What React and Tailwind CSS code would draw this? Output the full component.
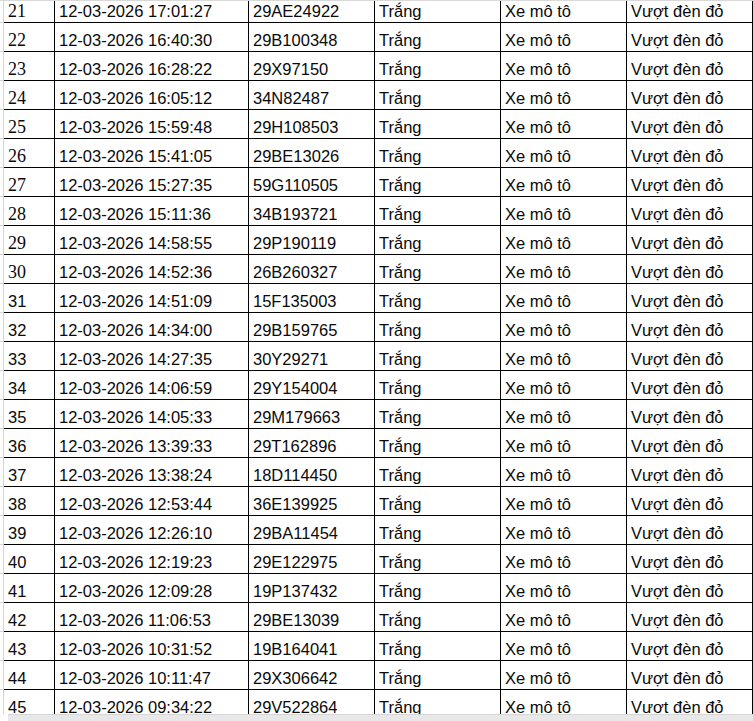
import React from "react";

const rows = [
  [21, "17:01:27", "29AE24922"],
  [22, "16:40:30", "29B100348"],
  [23, "16:28:22", "29X97150"],
  [24, "16:05:12", "34N82487"],
  [25, "15:59:48", "29H108503"],
  [26, "15:41:05", "29BE13026"],
  [27, "15:27:35", "59G110505"],
  [28, "15:11:36", "34B193721"],
  [29, "14:58:55", "29P190119"],
  [30, "14:52:36", "26B260327"],
  [31, "14:51:09", "15F135003"],
  [32, "14:34:00", "29B159765"],
  [33, "14:27:35", "30Y29271"],
  [34, "14:06:59", "29Y154004"],
  [35, "14:05:33", "29M179663"],
  [36, "13:39:33", "29T162896"],
  [37, "13:38:24", "18D114450"],
  [38, "12:53:44", "36E139925"],
  [39, "12:26:10", "29BA11454"],
  [40, "12:19:23", "29E122975"],
  [41, "12:09:28", "19P137432"],
  [42, "11:06:53", "29BE13039"],
  [43, "10:31:52", "19B164041"],
  [44, "10:11:47", "29X306642"],
  [45, "09:34:22", "29V522864"],
];

function Cell({ children, serif }) {
  return (
    <div
      className={
        "h-[29px] border-r border-b border-black flex items-end pl-[4px] pb-[1px] leading-[20px] whitespace-nowrap overflow-hidden " +
        (serif
          ? "font-['Liberation_Serif',serif] text-[18px]"
          : "font-['Liberation_Sans',Arial,sans-serif] text-[16.5px]")
      }
    >
      {children}
    </div>
  );
}

export default function App() {
  return (
    <div className="w-[753px] h-[721px] overflow-hidden bg-white relative text-[#0a0a0a]">
      <div className="absolute top-0 left-0 right-0 h-px bg-[#d9d9d9] z-10" />
      <div className="mt-[-7px] grid grid-cols-[4px_51px_194px_126px_126px_126px_126px] border-t border-black">
        {rows.map(([n, t, plate]) => (
          <React.Fragment key={n}>
            <div className="h-[29px] border-r border-b border-[#d4d4d4]" />
            <Cell serif={n <= 30}>{n}</Cell>
            <Cell>12-03-2026 {t}</Cell>
            <Cell>{plate}</Cell>
            <Cell>Trắng</Cell>
            <Cell>Xe mô tô</Cell>
            <Cell>Vượt đèn đỏ</Cell>
          </React.Fragment>
        ))}
      </div>
      <div className="absolute left-0 right-0 bottom-0 h-[7px] bg-white">
        <div className="ml-[8px] h-full bg-[#e8e8e8] border-t border-[#d6d6d6]" />
      </div>
    </div>
  );
}
